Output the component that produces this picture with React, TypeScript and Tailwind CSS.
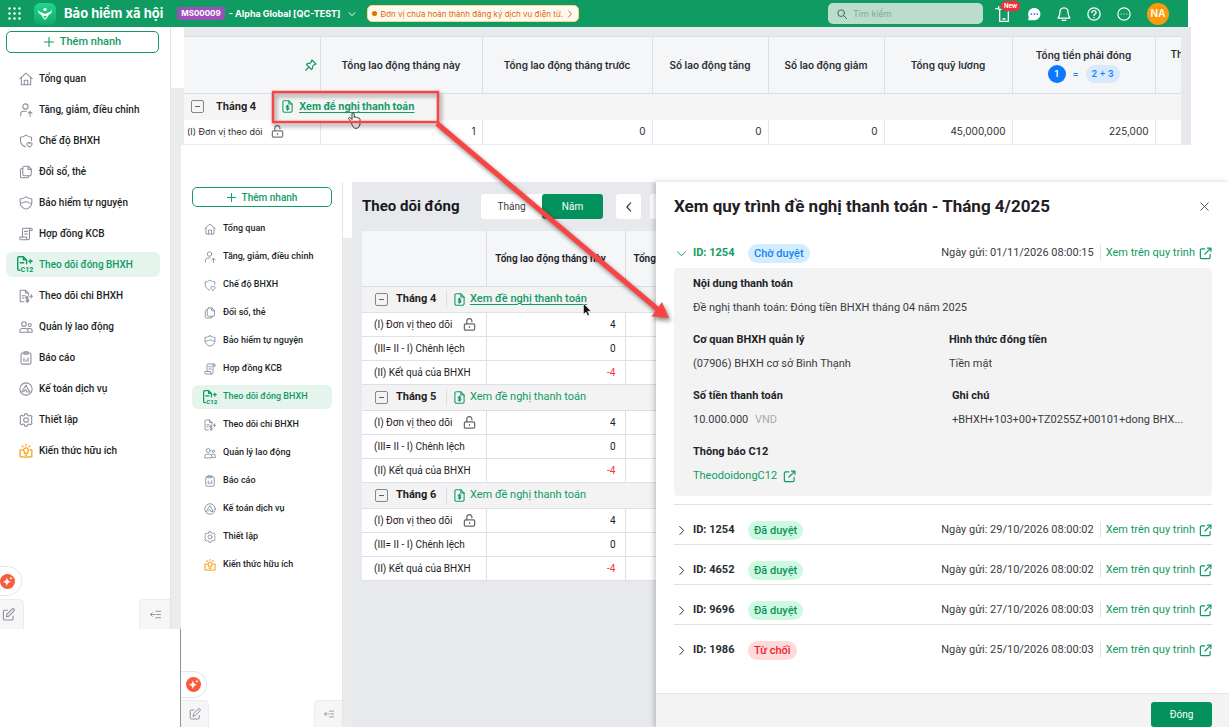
import { useState } from "react";
import type { ReactNode } from "react";
import clsx from "clsx";

/* ── Icons ── */

type IconProps = { className?: string; children?: ReactNode; sw?: number };

function Icon({ className, children, sw = 1.6 }: IconProps) {
  return (
    <svg
      viewBox="0 0 24 24"
      fill="none"
      stroke="currentColor"
      strokeWidth={sw}
      strokeLinecap="round"
      strokeLinejoin="round"
      className={clsx("shrink-0", className)}
      aria-hidden="true"
    >
      {children}
    </svg>
  );
}

const glyphs: Record<string, ReactNode> = {
  home: (
    <>
      <path d="M1.5 11.5 12 2l10.5 9.5" />
      <path d="M4 9.5V22h16V9.5" />
      <path d="M9 22v-8h6v8" />
    </>
  ),
  userUp: (
    <>
      <circle cx="11" cy="6" r="4.5" />
      <path d="M3 22v-3.500a4.500 4.500 0 0 1 4.500-4.500h5" />
      <path d="M19 23v-8M15.500 18l3.500-3.500 3.500 3.500" />
    </>
  ),
  shieldHeart: (
    <>
      <path d="M11 22C5 19.500 2.500 16 2.500 11V5.500C6 5.500 9 4.500 12 2c3 2.500 6 3.500 9.500 3.500V11" />
      <path d="M18 22.500c-3-2-4.500-3.500-4.500-5.300 0-2.700 3.300-3.200 4.500-.9 1.200-2.300 4.500-1.800 4.500.9 0 1.800-1.500 3.300-4.500 5.300z" />
    </>
  ),
  files: (
    <>
      <path d="M9 2h7l5 5v9a2.500 2.500 0 0 1-2.500 2.500H9A2.500 2.500 0 0 1 6.500 16V4.500A2.500 2.500 0 0 1 9 2z" />
      <path d="M15.500 2v5.500H21M6.500 6H5a2.500 2.500 0 0 0-2.500 2.500v11A2.500 2.500 0 0 0 5 22h9a2.500 2.500 0 0 0 2.500-2.500v-1" />
    </>
  ),
  shield: (
    <>
      <path d="M12 1.500c3 2.300 6 3 10 3.500v6c0 6-4 9.500-10 11.500C6 20.500 2 17 2 11V5c4-.5 7-1.200 10-3.500z" />
      <path d="M2.500 12.500c3.500.5 5.500-2.500 9.500-2.500s6 3 9.500 2.500" />
    </>
  ),
  scroll: (
    <>
      <path d="M6 17V4a2 2 0 0 1 2-2h12.500A2 2 0 0 1 22.500 4v2H18" />
      <path d="M20 2a2 2 0 0 0-2 2v15a3 3 0 0 1-3 3H4a2.500 2.500 0 0 1-2.500-2.500V17H13v2.500a2.500 2.500 0 0 0 2.500 2.500" />
      <path d="M9.500 7.500h5M9.500 12h5" />
    </>
  ),
  docCost: (
    <>
      <path d="M8.500 22H3.500A1.500 1.500 0 0 1 2 20.500v-17A1.500 1.500 0 0 1 3.500 2H11l5 5v3.500" />
      <path d="M11 2v5h5M5.500 11.500h5M5.500 15.500h3" />
      <path d="M15.500 15a2 2 0 1 0-2 2h1a2.300 2.300 0 1 1-2.300 2.300M14 12.800v10.200M21 9.500v6M18 12.500h6" />
    </>
  ),
  users: (
    <>
      <circle cx="8.500" cy="7" r="4" />
      <circle cx="18.500" cy="8.500" r="2.500" />
      <path d="M1.500 21v-2.500a4 4 0 0 1 4-4h6a4 4 0 0 1 4 4V21zM15.500 14.500H19a3.500 3.500 0 0 1 3.500 3.500v3h-7" />
    </>
  ),
  clipboard: (
    <>
      <rect x="3.500" y="3.500" width="17" height="19" rx="2.500" />
      <path d="M8.500 1.500h7v4h-7zM8.500 17.500v-5M12 17.500v-2.500M15.500 17.500v-6" />
    </>
  ),
  accounting: (
    <>
      <circle cx="12" cy="12" r="10.500" />
      <path d="M4.500 17 12 5.500 18.500 17h-5l-2-4-4 4" />
    </>
  ),
  gear: (
    <>
      <path d="M10 1.500h4l.8 2.700 2.400 1 2.500-1.400 2.700 2.700-1.400 2.500 1 2.400v1.700l-1 2 1.400 2.500-2.700 2.700-2.500-1.400-2.400 1L14 22.500h-4l-.8-2.600-2.400-1-2.500 1.400-2.700-2.700L3 15.100l-1-2v-1.700l1-2.400-1.400-2.500 2.700-2.700 2.500 1.400 2.400-1z" />
      <circle cx="12" cy="12" r="4" />
    </>
  ),
  knowledge: (
    <>
      <path d="M5.500 10H2v12h7l3 1 3-1h7V10h-3.500" />
      <path d="M12 6.500a4 4 0 0 0-2.500 7.200V16h5v-2.300A4 4 0 0 0 12 6.500zM10.500 19h3M12 1v2M5.500 3.500 7 5M18.500 3.500 17 5" />
    </>
  ),
};

function C12Icon({ className }: { className?: string }) {
  return (
    <svg viewBox="0 0 24 24" fill="none" stroke="currentColor" strokeWidth="2" className={clsx("shrink-0", className)} aria-hidden="true">
      <path d="M4 20H2.500A1.500 1.500 0 0 1 1 18.500v-16A1.500 1.500 0 0 1 2.500 1H9l4.500 4.500V11M9 1v4.500h4.500M4.500 9.500h5" strokeLinecap="round" strokeLinejoin="round" />
      <path d="M16 7.500h6M19 4.500v6" />
      <text x="5" y="23" fontSize="10" fontWeight="800" fill="currentColor" stroke="none">C12</text>
    </svg>
  );
}

function DocMoney({ className }: { className?: string }) {
  return (
    <Icon className={className} sw={2}>
      <path d="M14.500 1.500H6A2.500 2.500 0 0 0 3.500 4v16A2.500 2.500 0 0 0 6 22.500h12a2.500 2.500 0 0 0 2.500-2.500V7.500z" />
      <path d="M14.500 1.500v6h6M14.500 11.500c-.5-1-4.800-1.300-4.800.9 0 2.200 5 1.100 5 3.300 0 2.300-4.500 2-5.200.7M12 9.500v9.500" />
    </Icon>
  );
}

function Unlock({ className }: { className?: string }) {
  return (
    <Icon className={className} sw={2.3}>
      <rect x="2.500" y="11" width="19" height="11.500" rx="2" />
      <path d="M7 11V6a4.700 4.700 0 0 1 9.400-.5V7M12 16v1.500" />
    </Icon>
  );
}

function External({ className }: { className?: string }) {
  return (
    <Icon className={className} sw={2.2}>
      <path d="M10.500 3.500H5A2.500 2.500 0 0 0 2.500 6v13A2.500 2.500 0 0 0 5 21.500h13a2.500 2.500 0 0 0 2.500-2.500v-5.500M15.500 2h6.500v6.500M21.500 2.500 11 13" />
    </Icon>
  );
}

/* ── Top bar ── */

function TopBar() {
  return (
    <header className="mr-[41px] flex h-[27px] items-center bg-[#109b63] pl-2 text-white">
      <button aria-label="Ứng dụng">
        <svg viewBox="0 0 13 13" className="size-[13px]" fill="currentColor">
          {[1.5, 6.5, 11.5].map((y) => [1.5, 6.5, 11.5].map((x) => <circle key={`${x}-${y}`} cx={x} cy={y} r="1.200" />))}
        </svg>
      </button>
      <svg viewBox="0 0 22 22" className="ml-[13px] size-[22px]">
        <defs>
          <linearGradient id="logo" x1="0" y1="0" x2="0" y2="1">
            <stop offset="0" stopColor="#1fd98b" />
            <stop offset="1" stopColor="#0ea968" />
          </linearGradient>
        </defs>
        <rect width="22" height="22" rx="6" fill="url(#logo)" />
        <circle cx="11" cy="6.500" r="1.700" fill="#fff" />
        <path d="M4 6.500c.5 2 2.500 2.800 4.500 3.200L11 11l2.500-1.300C15.500 9.300 17.500 8.500 18 6.500c.3 3-1.500 4.500-3.500 5.500-.7 1.500-1 3-3.500 5-2.500-2-2.800-3.500-3.500-5C5.500 11 3.700 9.500 4 6.500zM9 12.500c.3 1.300 1 2 2 3 1-1 1.700-1.700 2-3L11 13.500z" fill="#fff" fillRule="evenodd" />
      </svg>
      <span className="ml-2 text-[13px] font-bold whitespace-nowrap">Bảo hiểm xã hội</span>
      <span className="ml-[14px] rounded-[3px] bg-[#9b51b9] px-1 text-[8px] leading-[13px] font-bold">MS00009</span>
      <button className="ml-1 flex items-center gap-2 text-[9px] font-bold whitespace-nowrap">
        - Alpha Global [QC-TEST]
        <Icon className="size-2" sw={3}><path d="m3 8 9 9 9-9" /></Icon>
      </button>
      <button className="ml-[11px] flex h-[17px] items-center gap-[3px] rounded-[5px] border border-[#ffd58a] bg-[#fffaf0] px-1 text-[8px] whitespace-nowrap text-[#d96a10]">
        <span className="size-[5px] rounded-full bg-[#e06c00]" />
        Đơn vị chưa hoàn thành đăng ký dịch vụ điện tử.
        <Icon className="size-2" sw={3}><path d="m8 3 8 9-8 9" /></Icon>
      </button>
      <label className="ml-auto flex h-[21px] w-[155px] items-center gap-[6px] rounded-[5px] bg-[#bcdccd] px-[9px] text-[#3d6e58]">
        <Icon className="size-[10px]" sw={2.4}><circle cx="10" cy="10" r="8" /><path d="m16 16 7 7" /></Icon>
        <input aria-label="Tìm kiếm" placeholder="Tìm kiếm" className="min-w-0 flex-1 bg-transparent text-[9px] outline-none placeholder:text-[#83ac99]" />
      </label>
      <div className="mr-[19px] ml-3 flex items-center gap-4">
        <button aria-label="Mới" className="relative">
          <Icon className="size-[16px]" sw={2}><path d="M9 5H7v18h13V9M12 19.500h3M1 4h3M5.500 1v4" /></Icon>
          <span className="absolute -top-[5px] left-[6px] rounded-full bg-[#fa2b36] px-[3px] text-[6px] leading-[10px] font-bold">New</span>
        </button>
        <button aria-label="Tin nhắn">
          <svg viewBox="0 0 24 24" className="size-[14px]">
            <path d="M12.500 1.500C18.500 1.500 23 6 23 12s-4.500 10.500-10.500 10.500H2l1-5.500C-.5 9 5 1.500 12.500 1.500z" fill="#fff" />
            <g fill="#4466dd"><circle cx="7.500" cy="12" r="1.500" /><circle cx="12.500" cy="12" r="1.500" /><circle cx="17.500" cy="12" r="1.500" /></g>
          </svg>
        </button>
        <button aria-label="Thông báo">
          <Icon className="size-[14px]" sw={2.2}><path d="M12 1.500c-5 0-7 3.500-7 8 0 4-.8 6-3 9.500h20c-2.200-3.500-3-5.500-3-9.500 0-4.500-2-8-7-8zM9 22.500c1.500.8 4.500.8 6 0" /></Icon>
        </button>
        <button aria-label="Trợ giúp">
          <Icon className="size-[14px]" sw={2.2}><circle cx="12" cy="12" r="10.500" /><path d="M8.500 9.500c0-4.500 7-4.500 7 0 0 2.500-3.500 2.500-3.500 5M12 18v.3" /></Icon>
        </button>
        <button aria-label="Thêm">
          <Icon className="size-[14px]" sw={2}><circle cx="12" cy="12" r="10.500" /><path d="M7 12h.2M12 12h.2M17 12h.2" /></Icon>
        </button>
        <span className="grid size-[22px] place-items-center rounded-full bg-[#fc9a0c] text-[10px] font-semibold">NA</span>
      </div>
    </header>
  );
}

/* ── Sidebar, in a large and a small size ── */

const MENU = [
  { icon: "home", label: "Tổng quan" },
  { icon: "userUp", label: "Tăng, giảm, điều chỉnh" },
  { icon: "shieldHeart", label: "Chế độ BHXH" },
  { icon: "files", label: "Đổi sổ, thẻ" },
  { icon: "shield", label: "Bảo hiểm tự nguyện" },
  { icon: "scroll", label: "Hợp đồng KCB" },
  { icon: "c12", label: "Theo dõi đóng BHXH" },
  { icon: "docCost", label: "Theo dõi chi BHXH" },
  { icon: "users", label: "Quản lý lao động" },
  { icon: "clipboard", label: "Báo cáo" },
  { icon: "accounting", label: "Kế toán dịch vụ" },
  { icon: "gear", label: "Thiết lập" },
  { icon: "knowledge", label: "Kiến thức hữu ích" },
];

function Sidebar({ small = false }: { small?: boolean }) {
  return (
    <aside className={clsx("flex shrink-0 flex-col border-r border-[#e3e4e8] bg-white font-[Roboto,Inter,sans-serif]", small ? "w-[162px]" : "w-[171px]")}>
      <button
        className={clsx(
          "flex items-center justify-center gap-[6px] rounded-[5px] border border-[#109b63] font-medium text-[#109b63]",
          small ? "mt-[5px] mr-[10px] ml-[11px] h-[20px] text-[10px]" : "mt-[4px] mr-[11px] ml-[6px] h-[22px] text-[11px]",
        )}
      >
        <Icon className={small ? "size-[9px]" : "size-[10px]"} sw={2.6}><path d="M12 1v22M1 12h22" /></Icon>
        Thêm nhanh
      </button>
      <nav className={clsx("flex flex-col", small ? "mt-[10px] mr-[10px] ml-[11px] gap-1" : "mt-[13px] mr-[10px] ml-[6px] gap-[6px]")}>
        {MENU.map((m) => (
          <a
            key={m.label}
            href="#"
            className={clsx(
              "flex items-center rounded-[6px] font-medium whitespace-nowrap",
              small ? "h-6 text-[9px]" : "h-[25px] text-[10px]",
              m.icon === "c12" ? "bg-[#e6f4ee] text-[#109b63]" : "text-[#1c1f24]",
            )}
          >
            <span className={clsx("flex shrink-0 justify-center", small ? "mr-[5px] ml-[10px] w-4" : "mr-[5px] ml-[11px] w-[17px]")}>
              {m.icon === "c12" ? (
                <C12Icon className={small ? "size-[15px]" : "size-[17px]"} />
              ) : (
                <Icon
                  className={clsx(small ? "size-[12px]" : "size-[14px]", m.icon === "knowledge" ? "text-[#fba31c]" : "text-[#8a8f9c]")}
                  sw={m.icon === "knowledge" ? 2.2 : 1.8}
                >
                  {glyphs[m.icon]}
                </Icon>
              )}
            </span>
            {m.label}
          </a>
        ))}
      </nav>
      <div className={clsx("mt-auto", !small && "pt-[103px]")}>
        <button
          aria-label="Trợ lý"
          className={clsx(
            "flex items-center rounded-r-full border border-l-0 border-[#e6e7ea] bg-white",
            small ? "h-[27px] w-[26px] pl-[5px]" : "h-[30px] w-[22px]",
          )}
        >
          <svg viewBox="0 0 24 24" className="size-[15px] shrink-0">
            <circle cx="12" cy="12" r="12" fill="#fb5a3c" />
            <path d="M11 5c.8 4.500 2 6 6.500 7.200C13 13.500 11.800 15 11 19.500 10.200 15 9 13.500 4.500 12.200 9 11 10.200 9.500 11 5zM17.500 4l.8 2 2 .8-2 .8-.8 2-.8-2-2-.8 2-.8z" fill="#fff" />
          </svg>
        </button>
        <div className={clsx("flex justify-between text-[#8a8f9c]", small ? "mt-[2px]" : "mt-[3px]")}>
          <button
            aria-label="Ghi chú"
            className={clsx("grid place-items-center rounded-tr-[5px] border-t border-r border-[#ececee] bg-[#f6f6f7]", small ? "h-[27px] w-[28px]" : "h-[30px] w-[24px] pr-[7px]")}
          >
            <Icon className={small ? "size-[12px]" : "size-[13px]"} sw={2}>
              <path d="M10 4H5a2.500 2.500 0 0 0-2.500 2.500v13A2.500 2.500 0 0 0 5 22h13a2.500 2.500 0 0 0 2.500-2.500V15M8 16l1-4.500 9.500-9.500a2.300 2.300 0 0 1 3.500 3.500L12.500 15z" />
            </Icon>
          </button>
          <button
            aria-label="Thu gọn"
            className={clsx("grid place-items-center rounded-tl-[5px] border-t border-l border-[#ececee] bg-[#f6f6f7]", small ? "h-[27px] w-[28px]" : "h-[30px] w-[31px]")}
          >
            <Icon className={small ? "size-[10px]" : "size-[11px]"} sw={2}><path d="M1 12h10M5 8l-4 4 4 4M13 5h10M15 12h8M13 19h10" /></Icon>
          </button>
        </div>
      </div>
    </aside>
  );
}

/* ── Upper table ── */

const TOTALS = [
  { label: "Tổng lao động tháng này", value: "1", w: "w-[162px]" },
  { label: "Tổng lao động tháng trước", value: "0", w: "w-[170px]" },
  { label: "Số lao động tăng", value: "0", w: "w-[116px]" },
  { label: "Số lao động giảm", value: "0", w: "w-[116px]" },
  { label: "Tổng quỹ lương", value: "45,000,000", w: "w-[128px]" },
];

function Minus({ month }: { month: string }) {
  return (
    <button aria-label={`Thu gọn ${month}`} className="grid size-[13px] place-items-center rounded-[2px] border border-[#85878c]">
      <span className="h-px w-[5px] bg-[#606266]" />
    </button>
  );
}

function UpperTable() {
  return (
    <table className="w-full table-fixed border-collapse bg-white text-[10px] text-[#2b2d31]">
      <thead>
        <tr className="h-[57px] border-y border-[#dcdee6] bg-[#f4f6f8] font-semibold">
          <th className="w-[136px] border-r border-[#dcdee6] pr-[3px]">
            <Icon className="ml-auto size-[12px] text-[#109b63]" sw={2.2}>
              <path d="m14 2 8 8-2 1-1-.3-4 4 .2 4L13 21l-10-10 2.300-2.300 4 .3 4-4L13 3zM7.500 16.500 1.500 22.500" />
            </Icon>
          </th>
          {TOTALS.map((t) => (
            <th key={t.label} className={clsx("border-r border-[#dcdee6] font-semibold whitespace-nowrap", t.w)}>{t.label}</th>
          ))}
          <th className="w-[143px] border-r border-[#dcdee6] font-semibold whitespace-nowrap">
            Tổng tiền phải đóng
            <span className="mt-[2px] flex items-center justify-center gap-[7px] text-[9px] text-[#1680ff]">
              <span className="grid size-[18px] place-items-center rounded-full bg-[#0a78ff] text-white">1</span>
              =
              <span className="rounded-full bg-[#d8e9fb] px-[6px] leading-[18px]">2 + 3</span>
            </span>
          </th>
          <th className="overflow-hidden pb-[22px] pl-[15px] text-left font-semibold">Th</th>
        </tr>
      </thead>
      <tbody>
        <tr className="h-[26px] bg-[#f5f5f6]">
          <td colSpan={8} className="p-0">
            <div className="flex items-center pl-[7px] whitespace-nowrap">
              <Minus month="Tháng 4" />
              <b className="ml-[12px] w-[41px] text-[#222]">Tháng 4</b>
              <a href="#" className="ml-[24px] flex items-center gap-[5px] font-bold text-[#109b63]">
                <DocMoney className="size-[13px]" />
                <span className="underline underline-offset-2">Xem đề nghị thanh toán</span>
              </a>
            </div>
          </td>
        </tr>
        <tr className="h-[25px] border-b border-[#ececee]">
          <td className="border-r border-[#e6e7eb] p-0">
            <div className="flex items-center gap-2 pl-[3px] text-[9px] whitespace-nowrap">
              (I) Đơn vị theo dõi
              <Unlock className="size-[13px] text-[#77797e]" />
            </div>
          </td>
          {TOTALS.map((t) => (
            <td key={t.label} className="border-r border-[#e6e7eb] pr-[6px] text-right">{t.value}</td>
          ))}
          <td className="border-r border-[#e6e7eb] pr-[6px] text-right">225,000</td>
          <td />
        </tr>
      </tbody>
    </table>
  );
}

/* ── Lower table ── */

const ROWS = [
  { label: "(I) Đơn vị theo dõi", value: 4, lock: true },
  { label: "(III= II - I) Chênh lệch", value: 0 },
  { label: "(II) Kết quả của BHXH", value: -4 },
];

function Tracking() {
  const [mode, setMode] = useState("Năm");
  return (
    <main className="min-w-0 flex-1 overflow-hidden bg-[#e8e9ed] pl-[10px] font-[Roboto,Inter,sans-serif]">
      <div className="flex h-[49px] items-center">
        <h1 className="w-[100px] shrink-0 text-[15px] font-bold whitespace-nowrap text-[#17191c]">Theo dõi đóng</h1>
        <div className="ml-[19px] flex h-[25px] shrink-0 rounded-[3px] bg-white text-[10px]">
          {["Tháng", "Năm"].map((m) => (
            <button
              key={m}
              onClick={() => setMode(m)}
              className={clsx("w-[61px] rounded-[3px]", m === mode ? "bg-[#03915e] text-white" : "text-[#3b3d40]")}
            >
              {m}
            </button>
          ))}
        </div>
        <button aria-label="Năm trước" className="ml-[13px] grid h-[25px] w-[25px] shrink-0 place-items-center rounded-[3px] bg-white text-[#333]">
          <Icon className="size-[10px]" sw={2.8}><path d="M16 2 7 12l9 10" /></Icon>
        </button>
        <span className="ml-[9px] h-[25px] w-[60px] shrink-0 rounded-[3px] bg-white" />
      </div>
      <table className="w-[460px] table-fixed border-collapse bg-white text-[10px] text-[#1f2124]">
        <thead>
          <tr className="h-[55px] border-b border-[#dcdde1] bg-[#f4f6f8]">
            <th className="w-[124px] border-r border-[#dcdde1]" />
            <th className="w-[139px] border-r border-[#dcdde1] pr-[10px] font-semibold whitespace-nowrap">Tổng lao động tháng này</th>
            <th className="pl-2 text-left font-semibold whitespace-nowrap">Tổng lao động tháng trước</th>
          </tr>
        </thead>
        {["Tháng 4", "Tháng 5", "Tháng 6"].map((month, i) => (
          <tbody key={month}>
            <tr className="h-[26px] border-y border-[#dfe0e3] bg-[#f3f3f4]">
              <td colSpan={3} className="p-0">
                <div className="flex items-center pl-[13px] text-[11px] whitespace-nowrap">
                  <Minus month={month} />
                  <b className="ml-2 w-[42px]">{month}</b>
                  <a href="#" className="ml-2 flex items-center gap-[4px] border-l border-[#dcdde1] pl-[6px] text-[#109b63]">
                    <DocMoney className="size-[13px]" />
                    <span className={clsx(i === 0 && "font-medium underline underline-offset-2")}>Xem đề nghị thanh toán</span>
                  </a>
                </div>
              </td>
            </tr>
            {ROWS.map((r) => (
              <tr key={r.label} className="h-6 border-b border-[#dfe0e3]">
                <td className="border-r border-[#dfe0e3] p-0">
                  <div className="flex items-center gap-[11px] pl-3 whitespace-nowrap">
                    {r.label}
                    {r.lock && <Unlock className="size-[13px] text-[#66686c]" />}
                  </div>
                </td>
                <td className={clsx("border-r border-[#dfe0e3] pr-[9px] text-right", r.value < 0 && "text-[#f5333a]")}>{r.value}</td>
                <td />
              </tr>
            ))}
          </tbody>
        ))}
      </table>
    </main>
  );
}

/* ── Payment request drawer ── */

const statusStyles: Record<string, string> = {
  "Chờ duyệt": "bg-[#d3edff] text-[#1683f5]",
  "Đã duyệt": "bg-[#cdf9e0] text-[#0d935c]",
  "Từ chối": "bg-[#ffdadb] text-[#f01e28]",
};

const REQUESTS = [
  { id: 1254, status: "Đã duyệt", sent: "29/10/2026 08:00:02" },
  { id: 4652, status: "Đã duyệt", sent: "28/10/2026 08:00:02" },
  { id: 9696, status: "Đã duyệt", sent: "27/10/2026 08:00:03" },
  { id: 1986, status: "Từ chối", sent: "25/10/2026 08:00:03" },
];

function RequestLine({ id, status, sent, open = false }: { id: number; status: string; sent: string; open?: boolean }) {
  return (
    <div className="flex h-[30px] items-center text-[11px] whitespace-nowrap text-[#3a3c3f]">
      <button className={clsx("flex w-[62px] shrink-0 items-center gap-[7px] pl-[3px] font-bold", open ? "text-[#109b63]" : "text-[#2b2d30]")}>
        <Icon className="size-[9px]" sw={2.6}><path d={open ? "m1 7 11 11L23 7" : "m7 1 11 11L7 23"} /></Icon>
        {`ID: ${id}`}
      </button>
      <span className={clsx("ml-3 rounded-full px-[6px] leading-[19px] font-medium", statusStyles[status])}>{status}</span>
      <span className="ml-auto">{`Ngày gửi: ${sent}`}</span>
      <a href="#" className="ml-[6px] flex items-center gap-1 border-l border-[#e2e3e5] pl-[5px] text-[#109b63]">
        Xem trên quy trình
        <External className="size-[13px]" />
      </a>
    </div>
  );
}

function Field({ label, children, wide = false }: { label: string; children: ReactNode; wide?: boolean }) {
  return (
    <div className={clsx(wide && "col-span-2")}>
      <dt className="font-bold text-[#222427]">{label}</dt>
      <dd>{children}</dd>
    </div>
  );
}

function Drawer() {
  return (
    <section className="relative flex w-[573px] shrink-0 flex-col bg-white font-[Roboto,Inter,sans-serif] shadow-[-2px_0_5px_rgba(0,0,0,0.2)]">
      <div className="flex h-[49px] items-center justify-between pr-5 pl-[18px]">
        <h2 className="text-[17px] font-bold whitespace-nowrap text-[#1f2124]">Xem quy trình đề nghị thanh toán - Tháng 4/2025</h2>
        <button aria-label="Đóng cửa sổ" className="text-[#55575b]">
          <Icon className="size-[9px]" sw={2.6}><path d="m2 2 20 20M22 2 2 22" /></Icon>
        </button>
      </div>
      <div className="mt-[7px] mr-[17px] ml-[18px] border-b border-[#dfe0e2] pb-2">
        <RequestLine id={1254} status="Chờ duyệt" sent="01/11/2026 08:00:15" open />
        <dl className="grid grid-cols-[256px_1fr] gap-y-2 rounded bg-[#f3f3f4] pt-1 pr-6 pb-2 pl-[19px] text-[11px] leading-6 whitespace-nowrap text-[#3a3c3f]">
          <Field label="Nội dung thanh toán" wide>Đề nghị thanh toán: Đóng tiền BHXH tháng 04 năm 2025</Field>
          <Field label="Cơ quan BHXH quản lý">(07906) BHXH cơ sở Bình Thạnh</Field>
          <Field label="Hình thức đóng tiền">Tiền mặt</Field>
          <Field label="Số tiền thanh toán">
            10.000.000 <span className="ml-1 text-[#a9abae]">VND</span>
          </Field>
          <div className="pl-[3px]">
            <Field label="Ghi chú">+BHXH+103+00+TZ0255Z+00101+dong BHX...</Field>
          </div>
          <Field label="Thông báo C12" wide>
            <a href="#" className="flex items-center gap-[6px] text-[#109b63]">
              TheodoidongC12
              <External className="size-[13px]" />
            </a>
          </Field>
        </dl>
      </div>
      <ul className="mr-[17px] ml-[18px] divide-y divide-[#dfe0e2]">
        {REQUESTS.map((r) => (
          <li key={r.id} className="h-10 pt-[10px]">
            <RequestLine id={r.id} status={r.status} sent={r.sent} />
          </li>
        ))}
      </ul>
      <footer className="mt-auto flex justify-end border-t border-[#e3e4e6] bg-[#f3f3f4] pt-2 pr-[17px]">
        <button className="h-[25px] w-[61px] rounded-[3px] bg-[#03915e] text-[10px] text-white">Đóng</button>
      </footer>
    </section>
  );
}

/* ── Callout frame, arrow and pointers drawn over the panels ── */

function Annotations() {
  return (
    <svg viewBox="0 0 700 340" className="pointer-events-none absolute top-0 left-0 h-[340px] w-[700px]" aria-hidden="true">
      <path d="M351 121.500c-1.500-2-3-2.500-2.300-3.600.8-1 2.300.2 3.300 1.600v-5.500c0-1.800 2.200-1.800 2.200 0v3.500c.5-1 2-.8 2.100.3.500-.8 1.800-.5 1.900.5.700-.6 1.800-.2 1.800 1v4c0 3-1.500 5-4 5-2.700 0-3.700-2.300-5-6.800z" fill="#fff" stroke="#333" strokeWidth="1" />
      <path d="M583.500 303.500v10.800l2.500-2.300 1.700 3.800 1.700-.8-1.700-3.700h3.300z" fill="#111" stroke="#fff" strokeWidth=".5" />
      <g style={{ filter: "drop-shadow(2px 3px 2px rgba(0,0,0,.45))" }}>
        <rect x="273" y="92" width="165" height="30" fill="none" stroke="#f94444" strokeWidth="2.500" />
        <path d="M437 123.500 658 309.500" stroke="#f94444" strokeWidth="5" />
        <path d="M669 318 651.500 316.500 662 302z" fill="#f94444" />
      </g>
    </svg>
  );
}

export default function App() {
  return (
    <div className="relative flex min-h-screen flex-col bg-white font-[Inter,'Liberation_Sans',sans-serif]">
      <TopBar />
      <div className="flex flex-1">
        <div className="flex w-[181px] shrink-0 flex-col">
          <div className="flex">
            <Sidebar />
            <div className="mt-[61px] flex-1 bg-[#ebecee]" />
          </div>
          <div className="flex-1 border-r border-[#8f9492]" />
        </div>
        <div className="flex min-w-0 flex-1 flex-col">
          <div className="mr-[38px] flex">
            <div className="mt-[61px] w-[3px] shrink-0 bg-[#ebecee]" />
            <div className="min-w-0 flex-1 bg-[#e8e9ed] pt-[9px] pr-[10px]">
              <UpperTable />
            </div>
          </div>
          <div className="mt-[37px] flex flex-1">
            <Sidebar small />
            <div className="mt-[56px] w-[9px] shrink-0 bg-[#ebecee]" />
            <Tracking />
            <Drawer />
          </div>
        </div>
      </div>
      <Annotations />
    </div>
  );
}
